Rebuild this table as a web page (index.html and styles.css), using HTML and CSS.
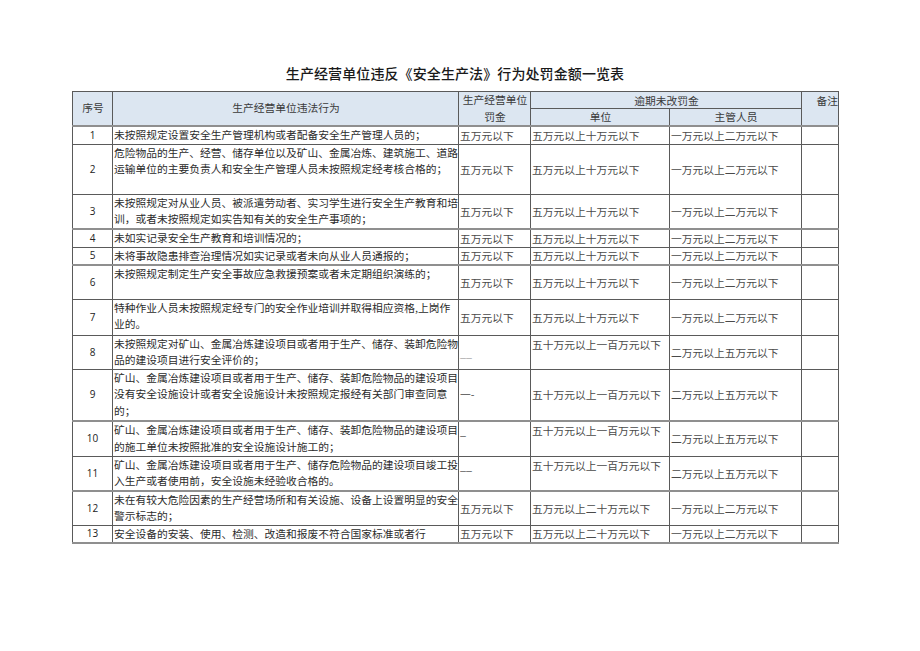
FILE: index.html
```html
<!DOCTYPE html>
<html lang="zh-CN">
<head>
<meta charset="utf-8">
<title>生产经营单位违反《安全生产法》行为处罚金额一览表</title>
<link rel="stylesheet" href="styles.css">
</head>
<body>
<div class="page">
  <h1 class="title">生产经营单位违反《安全生产法》行为处罚金额一览表</h1>
  <table class="sheet">
    <colgroup>
      <col class="c-no"><col class="c-desc"><col class="c-fine"><col class="c-unit"><col class="c-boss"><col class="c-note">
    </colgroup>
    <thead>
      <tr class="h1">
        <th rowspan="2" class="mid">序号</th>
        <th rowspan="2" class="mid">生产经营单位违法行为</th>
        <th rowspan="2" class="mid">生产经营单位<br>罚金</th>
        <th colspan="2" class="sub">逾期未改罚金</th>
        <th rowspan="2" class="note-h">备注</th>
      </tr>
      <tr class="h2">
        <th class="sub2">单位</th>
        <th class="sub2">主管人员</th>
      </tr>
    </thead>
    <tbody>
      <tr class="r17">
        <td class="no">1</td>
        <td class="desc">未按照规定设置安全生产管理机构或者配备安全生产管理人员的；</td>
        <td class="m">五万元以下</td><td class="m">五万元以上十万元以下</td><td class="m">一万元以上二万元以下</td><td></td>
      </tr>
      <tr class="r50">
        <td class="no">2</td>
        <td class="desc">危险物品的生产、经营、储存单位以及矿山、金属冶炼、建筑施工、道路<br>运输单位的主要负责人和安全生产管理人员未按照规定经考核合格的；</td>
        <td class="m">五万元以下</td><td class="m">五万元以上十万元以下</td><td class="m">一万元以上二万元以下</td><td></td>
      </tr>
      <tr class="r35 thick">
        <td class="no">3</td>
        <td class="desc">未按照规定对从业人员、被派遣劳动者、实习学生进行安全生产教育和培<br>训，或者未按照规定如实告知有关的安全生产事项的；</td>
        <td class="m">五万元以下</td><td class="m">五万元以上十万元以下</td><td class="m">一万元以上二万元以下</td><td></td>
      </tr>
      <tr class="r18">
        <td class="no">4</td>
        <td class="desc">未如实记录安全生产教育和培训情况的；</td>
        <td class="m">五万元以下</td><td class="m">五万元以上十万元以下</td><td class="m">一万元以上二万元以下</td><td></td>
      </tr>
      <tr class="r18 thick">
        <td class="no">5</td>
        <td class="desc">未将事故隐患排查治理情况如实记录或者未向从业人员通报的；</td>
        <td class="m">五万元以下</td><td class="m">五万元以上十万元以下</td><td class="m">一万元以上二万元以下</td><td></td>
      </tr>
      <tr class="r34">
        <td class="no">6</td>
        <td class="desc">未按照规定制定生产安全事故应急救援预案或者未定期组织演练的；</td>
        <td class="m">五万元以下</td><td class="m">五万元以上十万元以下</td><td class="m">一万元以上二万元以下</td><td></td>
      </tr>
      <tr class="r36">
        <td class="no">7</td>
        <td class="desc">特种作业人员未按照规定经专门的安全作业培训并取得相应资格,上岗作<br>业的。</td>
        <td class="m">五万元以下</td><td class="m">五万元以上十万元以下</td><td class="m">一万元以上二万元以下</td><td></td>
      </tr>
      <tr class="r34">
        <td class="no">8</td>
        <td class="desc">未按照规定对矿山、金属冶炼建设项目或者用于生产、储存、装卸危险物<br>品的建设项目进行安全评价的；</td>
        <td class="m light">__</td><td class="m top">五十万元以上一百万元以下</td><td class="m">二万元以上五万元以下</td><td></td>
      </tr>
      <tr class="r52 thick">
        <td class="no">9</td>
        <td class="desc">矿山、金属冶炼建设项目或者用于生产、储存、装卸危险物品的建设项目<br>没有安全设施设计或者安全设施设计未按照规定报经有关部门审查同意<br>的；</td>
        <td class="m">一-</td><td class="m">五十万元以上一百万元以下</td><td class="m">二万元以上五万元以下</td><td></td>
      </tr>
      <tr class="r35">
        <td class="no">10</td>
        <td class="desc">矿山、金属冶炼建设项目或者用于生产、储存、装卸危险物品的建设项目<br>的施工单位未按照批准的安全设施设计施工的；</td>
        <td class="m top">_</td><td class="m top">五十万元以上一百万元以下</td><td class="m">二万元以上五万元以下</td><td></td>
      </tr>
      <tr class="r34 thick">
        <td class="no">11</td>
        <td class="desc">矿山、金属冶炼建设项目或者用于生产、储存危险物品的建设项目竣工投<br>入生产或者使用前，安全设施未经验收合格的。</td>
        <td class="m top">__</td><td class="m top">五十万元以上一百万元以下</td><td class="m">二万元以上五万元以下</td><td></td>
      </tr>
      <tr class="r34">
        <td class="no">12</td>
        <td class="desc">未在有较大危险因素的生产经营场所和有关设施、设备上设置明显的安全<br>警示标志的；</td>
        <td class="m">五万元以下</td><td class="m">五万元以上二十万元以下</td><td class="m">一万元以上二万元以下</td><td></td>
      </tr>
      <tr class="r17 thick">
        <td class="no">13</td>
        <td class="desc">安全设备的安装、使用、检测、改造和报废不符合国家标准或者行</td>
        <td class="m">五万元以下</td><td class="m">五万元以上二十万元以下</td><td class="m">一万元以上二万元以下</td><td></td>
      </tr>
    </tbody>
  </table>
</div>
</body>
</html>
```

FILE: styles.css
```css
html, body {
  margin: 0;
  padding: 0;
  background: #ffffff;
}

.page {
  width: 766px;
  margin-left: 72px;
  padding-top: 63px;
  font-family: "Noto Sans CJK SC", "Noto Sans", sans-serif;
}

.title {
  margin: 0 0 8px 0;
  height: 20px;
  line-height: 20px;
  font-size: 14px;
  font-weight: 500;
  color: #1a1a1a;
  text-align: center;
  letter-spacing: 0.1px;
}

.sheet {
  border-collapse: collapse;
  table-layout: fixed;
  width: 767px;
  font-size: 10.75px;
  color: #333333;
}

.c-no { width: 40px; }
.c-desc { width: 346px; }
.c-fine { width: 72px; }
.c-unit { width: 139px; }
.c-boss { width: 132px; }
.c-note { width: 37px; }

.sheet th,
.sheet td {
  box-sizing: border-box;
  border: 1px solid #5a5a5a;
  padding: 0 0 0 1px;
  line-height: 15px;
  white-space: nowrap;
  overflow: visible;
  font-weight: 400;
}

.sheet thead th {
  background: #dce6f1;
  color: #3a3a3a;
  text-align: center;
}

.sheet tr.h1 { height: 17px; }
.sheet tr.h2 { height: 17px; }

.sheet th.mid { vertical-align: middle; line-height: 16.5px; }
.sheet th.sub { vertical-align: middle; }
.sheet th.sub2 { vertical-align: top; }
.sheet th.note-h {
  vertical-align: top;
  text-align: right;
  padding: 1px 0 0 0;
}

.sheet thead tr.h2 th,
.sheet thead th[rowspan] {
  border-bottom: 2px solid #8f8f8f;
}

.sheet tr.r17 { height: 17px; }
.sheet tr.r18 { height: 18px; }
.sheet tr.r34 { height: 34px; }
.sheet tr.r35 { height: 35px; }
.sheet tr.r36 { height: 36px; }
.sheet tr.r50 { height: 50px; }
.sheet tr.r52 { height: 52px; }

.sheet tr.thick td {
  border-bottom: 2px solid #8f8f8f;
}

.sheet td.no {
  text-align: center;
  vertical-align: middle;
  padding: 0;
  font-family: "Open Sans", "Liberation Sans", sans-serif;
  font-size: 10px;
  color: #222222;
}

.sheet td.desc {
  vertical-align: top;
  line-height: 16.5px;
  color: #2b2b2b;
  text-align: left;
}

.sheet td.m {
  vertical-align: middle;
  color: #4a4a4a;
  text-align: left;
}

.sheet td.m.top {
  vertical-align: top;
  padding-top: 1px;
}

.sheet td.light {
  color: #a0a0a0;
}
```
